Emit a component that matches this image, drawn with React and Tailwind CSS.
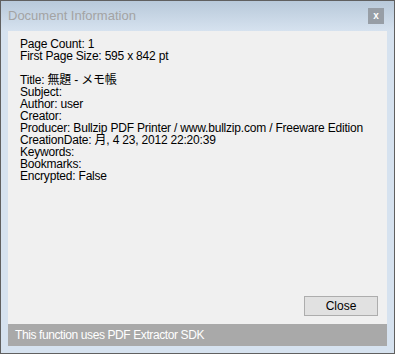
import React from 'react'

const lines = [
   'Page Count: 1',
   'First Page Size: 595 x 842 pt',
   '',
   'Title: 無題 - メモ帳',
   'Subject:',
   'Author: user',
   'Creator:',
   'Producer: Bullzip PDF Printer / www.bullzip.com / Freeware Edition',
   'CreationDate: 月, 4 23, 2012 22:20:39',
   'Keywords:',
   'Bookmarks:',
   'Encrypted: False',
]

const App = () => {
   return (
      <div className="w-[395px] h-[354px] border border-[#606060] bg-[#d6e2ef] flex flex-col" style={{ fontFamily: '"Liberation Sans", "Noto Sans CJK JP", sans-serif' }}>
         {/* title bar */}
         <div className="h-[30px] shrink-0 flex items-center justify-between pl-[7px] pr-[10px] bg-gradient-to-b from-[#b8c9da] to-[#d6e2ef]">
            <span className="text-[13px] text-[#a3a3a3]">Document Information</span>
            <button className="w-4 h-4 bg-[#979ea6] text-white text-[10px] font-bold leading-none flex items-center justify-center">x</button>
         </div>

         {/* content */}
         <div className="flex-1 mx-[7px] flex flex-col bg-[#f0f0f0]">
            <div className="flex-1 pl-[12px] pt-[7px] text-[12px] leading-[12px] tracking-[-0.2px] text-black">
               {lines.map((l, i) => (
                  <div key={i} className="h-[12px] leading-[12px] whitespace-nowrap">{l}</div>
               ))}
            </div>
            <div className="flex justify-end pr-[9px] pb-[8px]">
               <button className="w-[74px] h-[20px] bg-[#e1e1e1] border border-[#adadad] text-[12px] text-black">Close</button>
            </div>
            <div className="h-[22px] bg-[#a9a9a9] text-white text-[12px] tracking-[-0.4px] flex items-center pl-[7px]">This function uses PDF Extractor SDK</div>
         </div>
         <div className="h-[7px] shrink-0" />
      </div>
   )
}

export default App
